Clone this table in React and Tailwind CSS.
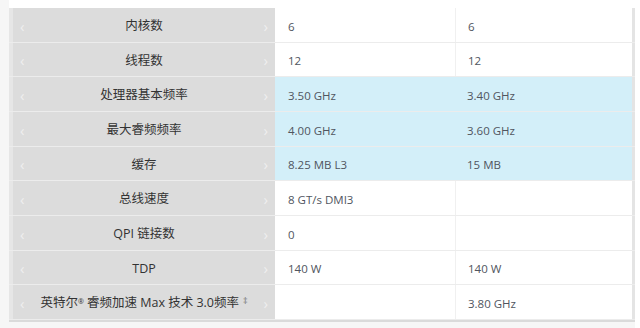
import React from "react";

const rows = [
  { label: "内核数", a: "6", b: "6" },
  { label: "线程数", a: "12", b: "12" },
  { label: "处理器基本频率", a: "3.50 GHz", b: "3.40 GHz", hl: true },
  { label: "最大睿频频率", a: "4.00 GHz", b: "3.60 GHz", hl: true },
  { label: "缓存", a: "8.25 MB L3", b: "15 MB", hl: true },
  { label: "总线速度", a: "8 GT/s DMI3", b: "" },
  { label: "QPI 链接数", a: "0", b: "" },
  { label: "TDP", a: "140 W", b: "140 W" },
  { label: "英特尔", a: "", b: "3.80 GHz", turbo: true },
];

const Row = ({ row }) => {
  const cell = row.hl ? "bg-[#d3eff9]" : "bg-white";
  return (
    <div className="flex h-[34.67px] border-b border-[#ececec]">
      <div className="flex w-[266px] items-center justify-between border-l-4 border-l-[#e6e6e6] bg-[#dcdcdc] px-[7px] pt-[3px] text-[#333]">
        <span className="text-[15px] leading-none text-[#efefef]">‹</span>
        <span className="text-[12.5px]">
          {row.label}
          {row.turbo && (
            <>
              <sup className="text-[7px]">®</sup> 睿频加速 Max 技术 3.0频率
              <span className="ml-1 align-top text-[9px] text-[#777]">‡</span>
            </>
          )}
        </span>
        <span className="text-[15px] leading-none text-[#efefef]">›</span>
      </div>
      <div className={`flex w-[180px] items-center pl-[13px] pt-[3px] text-[11.5px] text-[#505560] ${cell}`}>
        {row.a}
      </div>
      <div
        className={`flex w-[177px] items-center pl-[12px] pt-[3px] text-[11.5px] text-[#505560] ${cell} ${
          row.hl ? "" : "border-l border-[#f0f0f0]"
        }`}
      >
        {row.b}
      </div>
      <div className="w-[3px] bg-[#e4e4e4]" />
    </div>
  );
};

export default function App() {
  return (
    <div
      className="h-[328px] w-[640px] overflow-hidden bg-white"
      style={{ fontFamily: '"Open Sans", "Noto Sans CJK SC", sans-serif' }}
    >
      <div className="flex h-full">
        <div className="w-[9px] bg-[#f6f6f6]" />
        <div className="flex flex-col">
          <div className="h-[8px] bg-white" />
          {rows.map((r, i) => (
            <Row key={i} row={r} />
          ))}
          <div className="h-[2px] bg-[#dadada]" />
          <div className="flex-1 bg-[#f6f6f6]" />
        </div>
      </div>
    </div>
  );
}
